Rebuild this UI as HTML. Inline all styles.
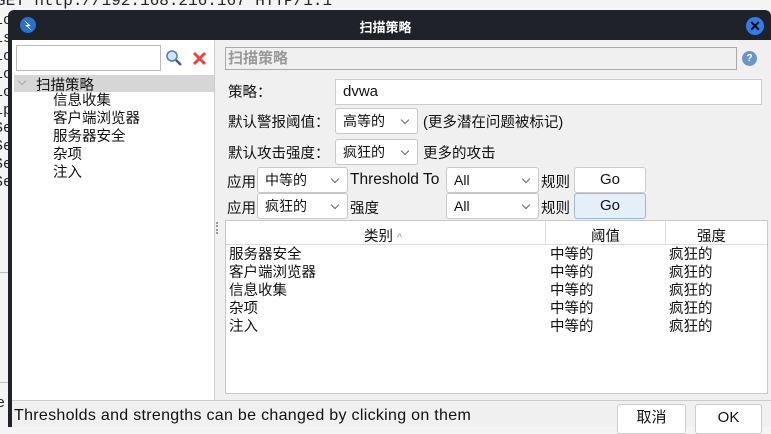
<!DOCTYPE html>
<html><head><meta charset="utf-8"><style>
*{box-sizing:border-box;margin:0;padding:0}
body{width:771px;height:427px;overflow:hidden;background:#f4f4f4;font-family:"Liberation Sans","Noto Sans CJK SC",sans-serif;font-size:14px;color:#111;position:relative}
.a{position:absolute}
.bg{font-family:"Liberation Mono",monospace;font-size:15px;color:#222;white-space:pre}
.sel{position:absolute;background:#fff;border:1px solid #c8c8c8;border-radius:3px;height:26px;line-height:24px;padding-left:7px;font-size:14px}
.sel:after{content:"";position:absolute;right:9px;top:8px;width:5px;height:5px;border-right:1px solid #666;border-bottom:1px solid #666;transform:rotate(45deg)}
.btn{position:absolute;background:#fff;border:1px solid #ccc;border-radius:3px;text-align:center;font-size:14px}
.lbl{position:absolute;font-size:14.5px;white-space:nowrap}
</style></head><body>
<div class="a bg" style="left:-4px;top:-8px;font-size:16px">GET http://192.168.216.167 HTTP/1.1</div>
<div class="a bg" style="left:-6px;top:12px;line-height:18px">lo
ls
lo
lo
lc
lp
Se
Se
Se
Se</div>
<div class="a" style="left:0;top:272px;width:8px;height:1px;background:#bbb"></div>
<div class="a" style="left:0;top:382px;width:8px;height:1px;background:#bbb"></div>
<div class="a bg" style="left:-4px;top:395px">e</div>
<div class="a" style="left:8px;top:10px;width:763px;height:417px;background:#1f2229;border-radius:6px 6px 0 0"></div>
<div class="a" style="left:20px;top:17px;width:16px;height:16px;border-radius:50%;background:#2a6fc9"></div>
<svg class="a" style="left:20px;top:17px" width="16" height="16"><path d="M4 3 L11 9 L8 9 L12 14 L5 8 L8 8 Z" fill="#fff"/></svg>
<div class="a" style="left:0;width:771px;top:17px;text-align:center;color:#fff;font-weight:bold;font-size:13px">扫描策略</div>
<div class="a" style="left:746px;top:17px;width:18px;height:18px;border-radius:50%;background:#2f7de8;color:#000;font-weight:bold;text-align:center;line-height:18px;font-size:14px">✕</div>
<div class="a" style="left:12px;top:40px;width:759px;height:387px;background:#f0f0f0"></div>
<div class="a" style="left:12px;top:40px;width:203px;height:360px;background:#fff;border-right:1px solid #ccc"></div>
<div class="a" style="left:16px;top:45px;width:145px;height:26px;border:1px solid #bbb;background:#fff"></div>
<svg class="a" style="left:165px;top:49px" width="18" height="18"><circle cx="7" cy="7" r="5" fill="#cfe4f7" stroke="#4a7fb8" stroke-width="1.5"/><path d="M11 11 L16 16" stroke="#3b5f8a" stroke-width="2.5"/></svg>
<svg class="a" style="left:192px;top:51px" width="15" height="15"><path d="M2 2 L13 13 M13 2 L2 13" stroke="#e8453c" stroke-width="3"/></svg>
<div class="a" style="left:14px;top:75px;width:200px;height:17px;background:#d6d6d6"></div>
<div class="a" style="left:19px;top:78px;width:6px;height:6px;border-right:1px solid #aaa;border-bottom:1px solid #aaa;transform:rotate(45deg)"></div>
<div class="lbl" style="left:36px;top:74px">扫描策略</div>
<div class="lbl" style="left:53px;top:92px;line-height:18px">信息收集<br>客户端浏览器<br>服务器安全<br>杂项<br>注入</div>
<div class="a" style="left:215px;top:40px;width:4px;height:360px;background:#f0f0f0"></div>
<div class="a" style="left:216px;top:222px;width:2px;height:12px;border-left:2px dotted #999"></div>
<div class="a" style="left:225px;top:47px;width:512px;height:23px;border:1px solid #aaa;background:#f0f0f0;color:#999;font-size:15px;padding-left:2px;line-height:21px;font-weight:bold">扫描策略</div>
<div class="a" style="left:742px;top:51px;width:15px;height:15px;border-radius:50%;background:#6b95c9;color:#fff;font-size:10px;text-align:center;line-height:15px;font-weight:bold">?</div>
<div class="lbl" style="left:228px;top:81px">策略：</div>
<div class="a" style="left:335px;top:79px;width:427px;height:26px;border:1px solid #ccc;background:#fff;padding-left:7px;line-height:24px;font-size:15px">dvwa</div>
<div class="lbl" style="left:228px;top:111px">默认警报阈值：</div>
<div class="sel" style="left:335px;top:108px;width:83px">高等的</div>
<div class="lbl" style="left:423px;top:111px">(更多潜在问题被标记)</div>
<div class="lbl" style="left:228px;top:142px">默认攻击强度：</div>
<div class="sel" style="left:335px;top:139px;width:83px">疯狂的</div>
<div class="lbl" style="left:423px;top:142px">更多的攻击</div>
<div class="lbl" style="left:227px;top:171px">应用</div>
<div class="sel" style="left:257px;top:167px;width:91px">中等的</div>
<div class="lbl" style="left:350px;top:171px;font-size:15.5px">Threshold To</div>
<div class="sel" style="left:446px;top:167px;width:93px">All</div>
<div class="lbl" style="left:541px;top:171px">规则</div>
<div class="btn" style="left:574px;top:167px;width:72px;height:26px;line-height:24px;font-size:15px">Go</div>
<div class="lbl" style="left:227px;top:197px">应用</div>
<div class="sel" style="left:257px;top:193px;width:91px">疯狂的</div>
<div class="lbl" style="left:350px;top:197px">强度</div>
<div class="sel" style="left:446px;top:193px;width:93px">All</div>
<div class="lbl" style="left:541px;top:197px">规则</div>
<div class="btn" style="left:574px;top:193px;width:72px;height:26px;line-height:24px;background:#e5eff9;border-color:#9fb7d1;font-size:15px">Go</div>
<div class="a" style="left:225px;top:220px;width:543px;height:174px;background:#fff;border:1px solid #c8c8c8"></div>
<div class="a" style="left:226px;top:221px;width:541px;height:24px;border-bottom:1px solid #ddd"></div>
<div class="a" style="left:545px;top:221px;width:1px;height:24px;background:#ddd"></div>
<div class="a" style="left:665px;top:221px;width:1px;height:24px;background:#ddd"></div>
<div class="lbl" style="left:364px;top:225px">类别 <span style="color:#999;font-size:11px">^</span></div>
<div class="lbl" style="left:591px;top:225px">阈值</div>
<div class="lbl" style="left:697px;top:225px">强度</div>
<div class="lbl" style="left:229px;top:246px;line-height:18px">服务器安全<br>客户端浏览器<br>信息收集<br>杂项<br>注入</div>
<div class="lbl" style="left:550px;top:246px;line-height:18px">中等的<br>中等的<br>中等的<br>中等的<br>中等的</div>
<div class="lbl" style="left:669px;top:246px;line-height:18px">疯狂的<br>疯狂的<br>疯狂的<br>疯狂的<br>疯狂的</div>
<div class="a" style="left:12px;top:400px;width:759px;height:1px;background:#ccc"></div>
<div class="lbl" style="left:14px;top:407px;font-size:16px;letter-spacing:0.3px">Thresholds and strengths can be changed by clicking on them</div>
<div class="btn" style="left:617px;top:404px;width:69px;height:30px;line-height:26px;font-size:15px">取消</div>
<div class="btn" style="left:695px;top:404px;width:67px;height:30px;line-height:26px;font-size:15px">OK</div>
</body></html>
